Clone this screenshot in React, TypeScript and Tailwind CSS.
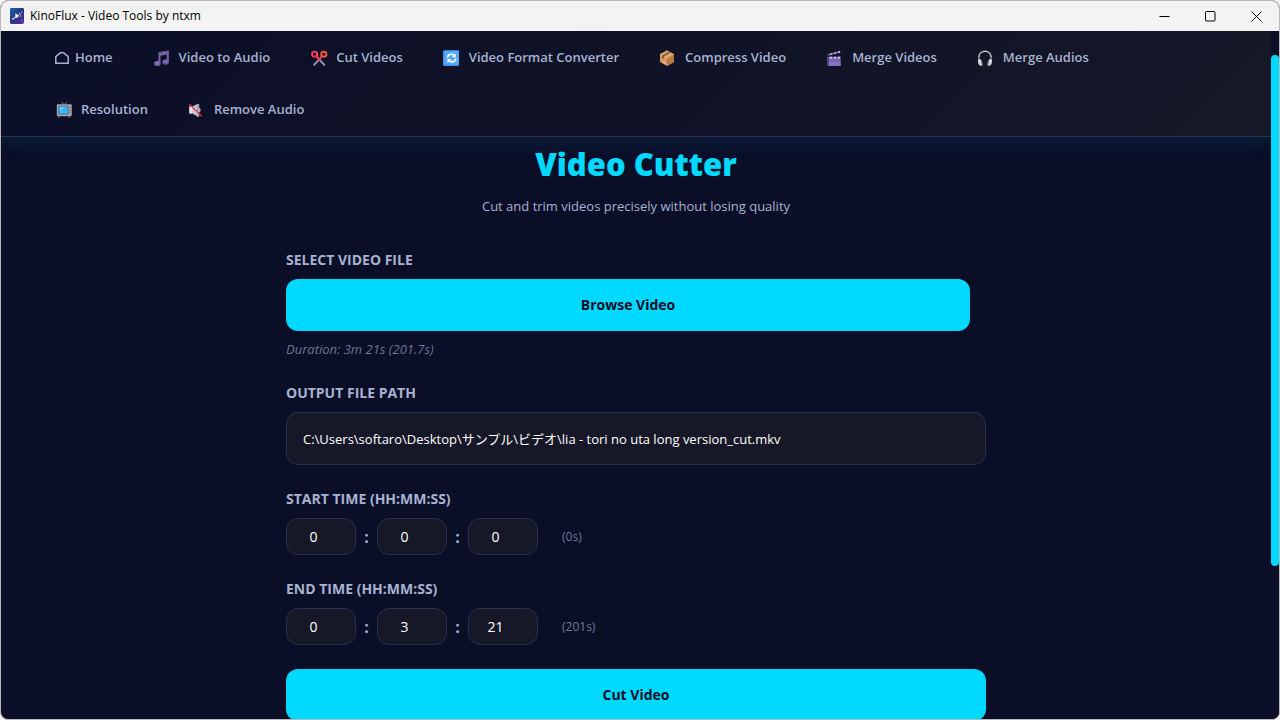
import { useState } from 'react'
import type { ReactNode } from 'react'

function HomeIcon() {
  return (
    <svg viewBox="0 0 14 14" className="h-3.5 w-3.5 shrink-0" fill="none" stroke="#a8b2d1" strokeWidth="1.5">
      <path d="M.8 12.3V5.6L4.9 2.1Q7 .9 9.1 2.1l4.1 3.500v6.700z" />
    </svg>
  )
}

function EmojiSvg({ children }: { children: ReactNode }) {
  return (
    <svg viewBox="0 0 20 18" className="h-[18px] w-5 shrink-0" fill="none">
      {children}
    </svg>
  )
}

function MusicIcon() {
  return (
    <EmojiSvg>
      <path d="M5.4 3.2 15.8 1.6v11.6h-2.1V5.6L7.5 6.8v7.8H5.4z" fill="#7762ab" />
      <path d="M5.4 3.2 15.8 1.6v1L5.4 4.2z" fill="#5b5378" />
      <ellipse cx="4.2" cy="14.4" rx="3.3" ry="2.7" fill="#6f5aa6" />
      <ellipse cx="12.6" cy="13" rx="3.2" ry="2.7" fill="#6f5aa6" />
      <ellipse cx="4.6" cy="13.8" rx="1.6" ry="1.1" fill="#8a75bd" />
      <ellipse cx="13" cy="12.4" rx="1.6" ry="1.1" fill="#8a75bd" />
    </EmojiSvg>
  )
}

function ScissorsIcon() {
  return (
    <EmojiSvg>
      <path d="m8.400 9.600 5.800 6.200M10 9.600l-5.800 6.200" stroke="#998bb5" strokeWidth="2" strokeLinecap="round" />
      <path d="m6.600 7.400 2.600 3 2.600-3" stroke="#f03a58" strokeWidth="2" />
      <ellipse cx="4.600" cy="5.200" rx="2.600" ry="2.400" stroke="#f8345f" strokeWidth="1.900" />
      <ellipse cx="13.800" cy="5.200" rx="2.600" ry="2.400" stroke="#fa5a3c" strokeWidth="1.900" />
      <path d="m6.600 3.800 1.200 3.600" stroke="#fa6a3c" strokeWidth="1.300" />
    </EmojiSvg>
  )
}

function ConvertIcon() {
  return (
    <EmojiSvg>
      <rect x="0" y="1.400" width="16" height="15.600" rx="1" fill="#3c8eea" />
      <rect x="1.400" y="1.400" width="14.600" height="14.400" rx=".8" fill="#53a8fb" />
      <path d="M4.600 8.600c0-3 4-4.400 6.400-2.300M12.700 9.600c0 3-4 4.400-6.500 2.400" stroke="#fff" strokeWidth="1.700" />
      <path d="M12.700 4.400v3.900H8.800zM4.500 13.800V9.900h3.900z" fill="#fff" />
    </EmojiSvg>
  )
}

function BoxIcon() {
  return (
    <EmojiSvg>
      <path d="M8 1.400 15 5.200v7.800l-7 4-7-4V5.200z" fill="#d9995d" />
      <path d="M8 9.200 15 5.200v7.800l-7 4z" fill="#b97a48" />
      <path d="m8 1.400 7 3.800-7 4-7-4z" fill="#e0a870" />
      <path d="m4.200 3.500 6.800 4v2.400L13 8.800V6.400l-6.800-4z" fill="#865a45" transform="matrix(-1 0 0 1 16 0)" />
      <path d="M4.200 12.400l2 1.100v1.200l-2-1.100z" fill="#f3dcd7" />
    </EmojiSvg>
  )
}

function ClapperIcon() {
  return (
    <EmojiSvg>
      <path d="M1.800 7.800h12.800v9H1.800z" fill="#7a66b5" />
      <path d="M1.800 12.800h12.800v4H1.800z" fill="#8873c6" />
      <path d="M1 7.800h2v9H1z" fill="#504678" />
      <path d="M1.400 5 14 1.800l.5 2L2 7z" fill="#5c5185" />
      <path d="m4.600 4.400 2-.5-.8 1.700-2 .5zM8.600 3.400l2-.5-.8 1.700-2 .5zM12.400 2.400l1.600-.4.200 1.400-2.400.6zM4 7.800h2.200l-.8 1.600H3.200zM8.200 7.800h2.200l-.8 1.600H7.400zM12.200 7.800h2.200l-.6 1.600h-2.200z" fill="#ddd3f4" />
    </EmojiSvg>
  )
}

function HeadphonesIcon() {
  return (
    <EmojiSvg>
      <path d="M2 11.400V8.200c0-8 12-8 12 0v3.200" stroke="#77757c" strokeWidth="1.800" />
      <path d="M1.800 8c.2-7.400 12.200-7.400 12.400 0" stroke="#d4d1d6" strokeWidth="1" />
      <path d="M1.200 10.400c2.400-1.500 3.800.3 4.400 6.200-2.700 1-5.200-1.200-4.400-6.200z" fill="#d9d6dc" />
      <path d="M14.800 10.400c-2.400-1.500-3.800.3-4.400 6.200 2.700 1 5.200-1.200 4.400-6.200z" fill="#d9d6dc" />
      <path d="M4.300 10.400c1 1.200 1.300 3.200 1.300 6.200l-1.300.1zM11.700 10.400c-1 1.200-1.300 3.200-1.300 6.200l1.300.1z" fill="#77757c" />
    </EmojiSvg>
  )
}

function TvIcon() {
  return (
    <EmojiSvg>
      <path d="m6.400.8 2.400 2.600M12 .8 9.600 3.400" stroke="#8d8994" strokeWidth="1" />
      <path d="M4 15v2M14.200 15v2" stroke="#5e5965" strokeWidth="1.300" />
      <rect x="1.800" y="3.200" width="15" height="12" rx="1.200" fill="#aaa1ab" />
      <rect x="3.400" y="4.800" width="10.200" height="8.800" rx="1" fill="#306c9c" />
      <rect x="4.200" y="5.600" width="8.600" height="7.200" rx=".6" fill="#39b4ee" />
      <path d="M5 6.200h4.600L5 10.400z" fill="#65cdf8" />
      <circle cx="15.200" cy="6.600" r=".8" fill="#e0445c" />
      <path d="M14.600 9.400h1.400M14.600 11.400h1.400" stroke="#6b6570" strokeWidth=".8" />
    </EmojiSvg>
  )
}

function MuteIcon() {
  return (
    <EmojiSvg>
      <path d="M1.400 5.400h3L9 3.200l1.200-.4v13L9 15.200l-4.600-2.600h-3z" fill="#c9c4cb" />
      <path d="M1.400 5.400h2.800v7.200H1.400z" fill="#e4e1e6" />
      <path d="M9 3h2.200v12.800H9z" fill="#a9a4ad" />
      <path d="M11.200 7c1.800.4 1.800 3.800 0 4.300z" fill="#dcd8df" />
      <path d="m1.200 3 12.600 12.400" stroke="#f1315c" strokeWidth="1.200" />
    </EmojiSvg>
  )
}

function AppLogo() {
  return (
    <svg viewBox="0 0 14 16" className="h-4 w-3.5">
      <defs>
        <linearGradient id="logo" x1="0" y1="0" x2="1" y2="1">
          <stop offset="0" stopColor="#1765a8" />
          <stop offset=".5" stopColor="#25377f" />
          <stop offset="1" stopColor="#5b2c9c" />
        </linearGradient>
      </defs>
      <rect width="14" height="16" rx="1.400" fill="url(#logo)" />
      <path d="M5.400 5.200 9 7.400l-1 1.800-2.600 1z" fill="#fff" />
      <path d="M2 10.200h2.400v1.400H2zM9 5h1.400v1.400H9zM11.200 3.400h1v1h-1zM9.800 7.400h1.400v1H9.800zM4 8.800h1.400v1.200H4z" fill="#dce9ff" />
      <path d="M11 11.800h1v1h-1zM12.400 14h1v1h-1z" fill="#a99bea" />
    </svg>
  )
}

const navLinks = [
  { label: 'Home', href: '#home', icon: <HomeIcon /> },
  { label: 'Video to Audio', href: '#video-to-audio', icon: <MusicIcon /> },
  { label: 'Cut Videos', href: '#cut', icon: <ScissorsIcon /> },
  { label: 'Video Format Converter', href: '#convert', icon: <ConvertIcon /> },
  { label: 'Compress Video', href: '#compress', icon: <BoxIcon /> },
  { label: 'Merge Videos', href: '#merge-videos', icon: <ClapperIcon /> },
  { label: 'Merge Audios', href: '#merge-audios', icon: <HeadphonesIcon /> },
  { label: 'Resolution', href: '#resolution', icon: <TvIcon /> },
  { label: 'Remove Audio', href: '#remove-audio', icon: <MuteIcon /> },
]

function TitleBar() {
  return (
    <div className="flex h-[30px] shrink-0 items-center justify-between bg-[#f3f3f3] pl-[9px] text-black">
      <div className="flex items-center gap-1.5">
        <AppLogo />
        <span className="text-xs">KinoFlux - Video Tools by ntxm</span>
      </div>
      <div className="flex h-full">
        <button type="button" aria-label="Minimize" className="flex w-[45px] items-center justify-center">
          <svg viewBox="0 0 11 11" className="h-[11px] w-[11px]" stroke="currentColor">
            <path d="M.5 5.500h10" />
          </svg>
        </button>
        <button type="button" aria-label="Maximize" className="flex w-[46px] items-center justify-center">
          <svg viewBox="0 0 11 11" className="h-[11px] w-[11px]" stroke="currentColor" fill="none">
            <rect x=".5" y=".5" width="9.500" height="9.500" rx="1" />
          </svg>
        </button>
        <button type="button" aria-label="Close" className="flex w-[46px] items-center justify-center">
          <svg viewBox="0 0 11 11" className="h-[11px] w-[11px]" stroke="currentColor">
            <path d="M.5.5l10 10M10.500.5l-10 10" />
          </svg>
        </button>
      </div>
    </div>
  )
}

function Navbar() {
  return (
    <nav className="relative z-10 shrink-0 border-b border-[#2a2f52] bg-linear-135 from-[#0a0e27] to-[#161827] py-2 shadow-[0_4px_20px_rgba(0,217,255,0.12)]">
      <div className="mx-auto flex max-w-[1200px] flex-wrap gap-x-2 gap-y-[15px] px-[3px]">
        {navLinks.map((link) => (
          <a
            key={link.href}
            href={link.href}
            className="flex items-center gap-1.5 rounded-lg px-4 py-2 text-[13px] leading-[21px] font-semibold text-[#a8b2d1] hover:text-[#00d9ff]"
          >
            {link.icon}
            {link.label}
          </a>
        ))}
      </div>
    </nav>
  )
}

const labelClass = 'mb-[9px] block text-sm leading-5 font-bold text-[#a8b2d1] uppercase'
const fieldClass = 'rounded-xl border border-[#2a2f4c] bg-[#161827] text-white outline-none focus:border-[#00d9ff]'

interface TimeFieldProps {
  id: string
  label: string
  value: number[]
  onChange: (value: number[]) => void
}

function TimeField({ id, label, value, onChange }: TimeFieldProps) {
  const units = ['hours', 'minutes', 'seconds']
  const total = value[0] * 3600 + value[1] * 60 + value[2]

  return (
    <div>
      <label htmlFor={`${id}-hours`} className={labelClass}>{label}</label>
      <div className="flex items-center">
        {units.map((unit, i) => (
          <div key={unit} className="flex items-center">
            {i > 0 && <span className="w-[21px] text-center text-base font-bold text-[#a8b2d1]">:</span>}
            <input
              id={`${id}-${unit}`}
              type="number"
              min={0}
              aria-label={`${label} ${unit}`}
              value={value[i]}
              onChange={(e) => onChange(value.map((v, j) => (j === i ? Number(e.target.value) : v)))}
              className={`${fieldClass} h-[37px] w-[70px] px-2 text-center text-sm`}
            />
          </div>
        ))}
        <span className="ml-6 text-xs text-[#717a94]">({total}s)</span>
      </div>
    </div>
  )
}

export default function App() {
  const [output, setOutput] = useState('C:\\Users\\softaro\\Desktop\\サンプル\\ビデオ\\lia - tori no uta long version_cut.mkv')
  const [start, setStart] = useState([0, 0, 0])
  const [end, setEnd] = useState([0, 3, 21])

  return (
    <div className="h-screen bg-[#f3f3f3] font-['Open_Sans','Noto_Sans_CJK_JP',sans-serif]">
      <div className="flex h-full flex-col overflow-hidden rounded-lg border border-[#b9b9b9] bg-[#0a0e27]">
        <TitleBar />
        <div className="flex min-h-0 flex-1">
          <div className="flex min-w-0 flex-1 flex-col overflow-hidden">
            <Navbar />
            <main className="min-h-0 flex-1 overflow-hidden pt-[7px]">
              <h1 className="mb-2.5 text-center text-[31px] leading-10 font-black text-[#00d9ff]">Video Cutter</h1>
              <p className="mb-8 text-center text-[13px] leading-6 text-[#a8b2d1]">
                Cut and trim videos precisely without losing quality
              </p>

              <form className="mx-auto flex max-w-[700px] flex-col gap-6" onSubmit={(e) => e.preventDefault()}>
                <div>
                  <label htmlFor="browse" className={labelClass}>Select Video File</label>
                  <div className="pr-4">
                    <button id="browse" type="button" className="h-[52px] w-full rounded-xl bg-[#00d9ff] text-sm font-bold text-[#0a0e27]">
                      Browse Video
                    </button>
                  </div>
                  <p className="mt-2 text-[13px] leading-5 text-[#6c7690] italic">Duration: 3m 21s (201.7s)</p>
                </div>

                <div>
                  <label htmlFor="output" className={labelClass}>Output File Path</label>
                  <input
                    id="output"
                    type="text"
                    value={output}
                    onChange={(e) => setOutput(e.target.value)}
                    className={`${fieldClass} block h-[53px] w-full px-4 text-[13px]`}
                  />
                </div>

                <TimeField id="start" label="Start Time (HH:MM:SS)" value={start} onChange={setStart} />
                <TimeField id="end" label="End Time (HH:MM:SS)" value={end} onChange={setEnd} />

                <button type="submit" className="h-[52px] shrink-0 rounded-xl bg-[#00d9ff] text-sm font-bold text-[#0a0e27]">
                  Cut Video
                </button>
              </form>
            </main>
          </div>

          {/* Scrollbar */}
          <div className="w-2 shrink-0 bg-[#0a0e27] pt-6">
            <div className="h-[77%] rounded-full bg-[#00d9ff]" />
          </div>
        </div>
      </div>
    </div>
  )
}
